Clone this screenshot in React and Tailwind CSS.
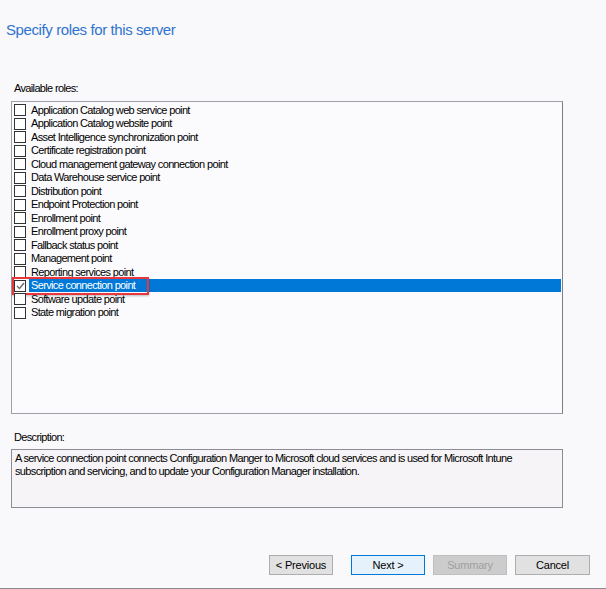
const roles = [
  'Application Catalog web service point',
  'Application Catalog website point',
  'Asset Intelligence synchronization point',
  'Certificate registration point',
  'Cloud management gateway connection point',
  'Data Warehouse service point',
  'Distribution point',
  'Endpoint Protection point',
  'Enrollment point',
  'Enrollment proxy point',
  'Fallback status point',
  'Management point',
  'Reporting services point',
  'Service connection point',
  'Software update point',
  'State migration point',
]

const selected = 'Service connection point'

function Checkbox({ checked }) {
  return (
    <span className="w-[12px] h-[12px] shrink-0 border border-[#333333] bg-white flex items-center justify-center">
      {checked && (
        <svg width="9" height="8" viewBox="0 0 9 8">
          <path d="M1 4 L3.5 6.5 L8 1" fill="none" stroke="#6e6e6e" strokeWidth="1.4" />
        </svg>
      )}
    </span>
  )
}

function RoleRow({ label }) {
  const active = label === selected
  return (
    <div className="relative flex items-center h-[13.5px]">
      <div className="pl-[1px] pr-[3px] flex items-center">
        <Checkbox checked={active} />
      </div>
      <div
        className={`flex-1 h-[13px] flex items-center pl-[2px] ${
          active ? 'bg-[#0078d7] text-white' : 'text-black'
        }`}
      >
        {label}
      </div>
      {active && (
        <div className="absolute left-[-1px] top-[-2px] w-[137px] h-[18px] border-2 border-[#e8383d] shadow-[0_1px_2px_rgba(0,0,0,0.25)]" />
      )}
    </div>
  )
}

function WizardButton({ children, className }) {
  return (
    <button
      className={`h-[20px] flex items-center justify-center border text-[11px] tracking-[-0.2px] ${className}`}
    >
      {children}
    </button>
  )
}

export default function App() {
  return (
    <div
      className="w-[606px] h-[589px] bg-[#f9f8fb] flex flex-col text-[11px] tracking-[-0.65px] leading-[13px] text-black"
      style={{ fontFamily: '"Liberation Sans", Arial, sans-serif' }}
    >
      <h1 className="mt-[21px] pl-[6px] text-[15px] leading-[18px] tracking-[-0.4px] text-[#2f74d0] font-normal">
        Specify roles for this server
      </h1>

      <div className="mt-[43px] pl-[14px]">Available roles:</div>

      {/* roles list */}
      <div className="mt-[6px] ml-[11px] w-[552px] h-[313px] border border-[#a0a0a8] border-r-[#7d7d87] bg-[#fbfafc] pt-[1.5px] pl-[1px] pr-[1px]">
        {roles.map((r) => (
          <RoleRow key={r} label={r} />
        ))}
      </div>

      <div className="mt-[17px] pl-[14px]">Description:</div>

      <div className="mt-[5px] ml-[11px] w-[552px] h-[59px] border border-[#8c8c94] bg-[#f6f4f7] pl-[3px] pt-[2px]">
        A service connection point connects Configuration Manger to Microsoft cloud services and is used for Microsoft Intune
        <br />
        subscription and servicing, and to update your Configuration Manager installation.
      </div>

      {/* wizard buttons */}
      <div className="mt-[47px] flex">
        <WizardButton className="ml-[269px] w-[64px] bg-[#e1e1e1] border-[#adadad] text-black">
          &lt; Previous
        </WizardButton>
        <WizardButton className="ml-[18px] w-[74px] bg-[#e5f1fb] border-[#0078d7] text-black">
          Next &gt;
        </WizardButton>
        <WizardButton className="ml-[8px] w-[74px] bg-[#cccccc] border-[#bfbfbf] text-[#a0a0a0]">
          Summary
        </WizardButton>
        <WizardButton className="ml-[8px] w-[75px] bg-[#e1e1e1] border-[#adadad] text-black">
          Cancel
        </WizardButton>
      </div>

      <div className="mt-auto h-[1px] bg-[#8a8a8a]" />
    </div>
  )
}
